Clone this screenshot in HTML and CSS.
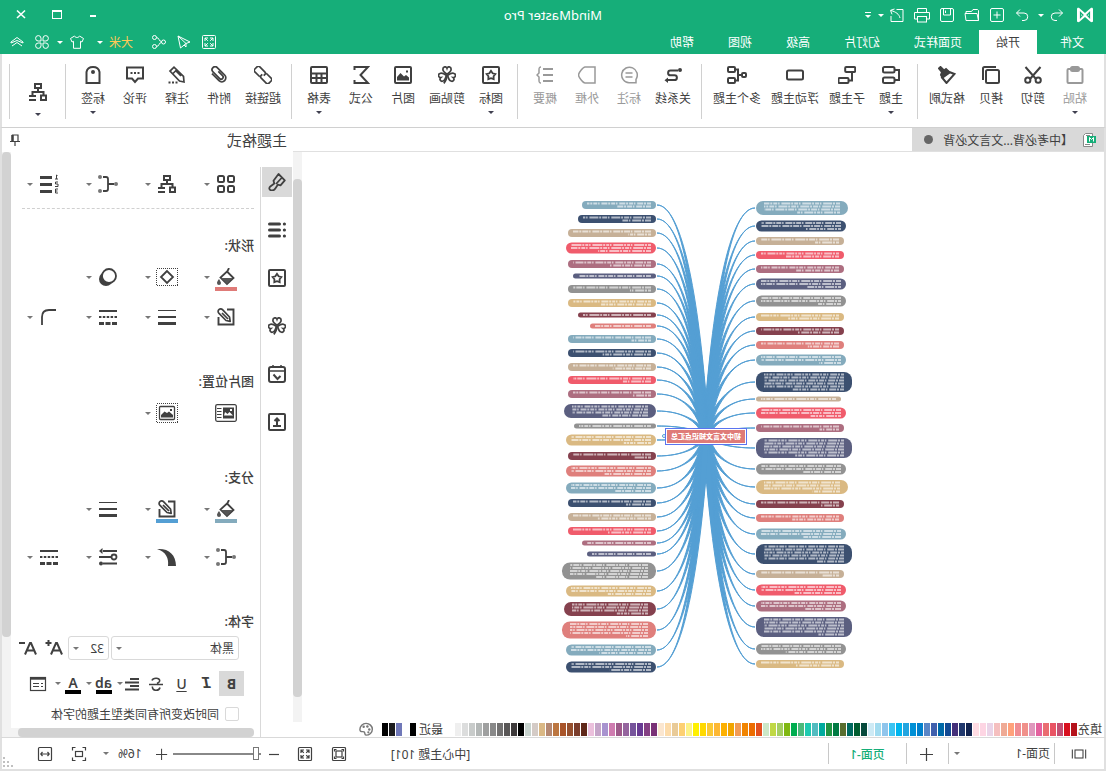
FILE: index.html
```html
<!DOCTYPE html>
<html lang="zh-CN">
<head>
<meta charset="utf-8">
<title>MindMaster Pro</title>
<link rel="stylesheet" href="styles.css">
</head>
<body>
<svg class="defs" aria-hidden="true">
  <symbol id="logo" viewBox="0 0 18 16"><path fill="#fff" stroke="none" d="M1 2C1 .8 2.6.4 3.500 1.300L9 6l5.500-4.700C15.400.4 17 .8 17 2v12c0 1.200-1.600 1.600-2.500.7L9 10l-5.500 4.700C2.600 15.600 1 15.200 1 14z"/><path stroke="#16ae79" stroke-width="1.200" fill="none" d="M4.500 5.500v5l2.500-2.500zM13.500 5.500v5L11 8z"/></symbol>
  <symbol id="undo" viewBox="0 0 16 16"><path d="M6 2.500 2.500 6 6 9.500M2.500 6H10a3.700 3.700 0 0 1 0 7.500H8"/></symbol>
  <symbol id="redo" viewBox="0 0 16 16"><path d="M10 2.500 13.500 6 10 9.500M13.500 6H6a3.700 3.700 0 0 0 0 7.500h2"/></symbol>
  <symbol id="new" viewBox="0 0 16 16"><rect x="1.500" y="1.500" width="13" height="13" rx="1.500"/><path d="M8 4.500v7M4.500 8h7"/></symbol>
  <symbol id="open" viewBox="0 0 16 16"><path d="M1.500 13.500V3.500l1-1H7l1.500 2H14v2M1.500 13.500 3 6.500h12l-1 7z"/></symbol>
  <symbol id="save" viewBox="0 0 16 16"><rect x="1.500" y="1.500" width="13" height="13" rx="1.500"/><path d="M4.500 2v6h7V2M9.500 3.500v2.500"/></symbol>
  <symbol id="print" viewBox="0 0 16 16"><path d="M3.500 5V1.500h9V5M3.500 12H.5V5.500h15V12h-3"/><rect x="3.500" y="9.500" width="9" height="5.500"/></symbol>
  <symbol id="export" viewBox="0 0 16 16"><path d="M8.500 2.500H2v12h12V9M5 11c1-4 4-6 9-7.500M10.500 2l4 1.300-1.500 4"/></symbol>
  <symbol id="expand" viewBox="0 0 16 16"><rect x="1.500" y="1.500" width="13" height="13" rx="1"/><path d="M4 7V4h3M4 4l2.800 2.800M9 4h3v3M12 4 9.200 6.800M4 9v3h3M4 12l2.800-2.800M12 9v3H9M12 12 9.200 9.200"/></symbol>
  <symbol id="cursor" viewBox="0 0 16 16"><path d="M14 2 2 8l4 1.500L11.500 14zM14 2 6 9.500V13l2-2"/></symbol>
  <symbol id="share" viewBox="0 0 16 16"><circle cx="3.500" cy="8" r="2"/><circle cx="12.500" cy="3.500" r="2"/><circle cx="12.500" cy="12.500" r="2"/><path d="M5.500 7.500c3 0 2-4 5-4M5.500 8.500c3 0 2 4 5 4"/></symbol>
  <symbol id="shirt" viewBox="0 0 16 16"><path d="M5.500 2 1.500 4.500 3 8l1.500-.7v7h7v-7L13 8l1.500-3.500-4-2.500c-1 2-4 2-5 0z"/></symbol>
  <symbol id="apps" viewBox="0 0 16 16"><path d="M7 7H4.200A2.700 2.700 0 1 1 7 4.200zM9 7V4.200A2.700 2.700 0 1 1 11.800 7zM7 9v2.800A2.700 2.700 0 1 1 4.200 9zM9 9h2.800A2.700 2.700 0 1 1 9 11.800z"/></symbol>
  <symbol id="up" viewBox="0 0 16 16"><path d="m2 8 6-4.500L14 8v1L8 6.500 2 9zM3 12l5-3.500 5 3.500"/></symbol>
  <symbol id="min" viewBox="0 0 16 16"><path stroke-width="2" d="M5 9h6"/></symbol>
  <symbol id="max" viewBox="0 0 16 16"><rect x="3.500" y="3.500" width="9" height="8" stroke-width="1"/><path d="M3 4h10" stroke-width="2"/></symbol>
  <symbol id="close" viewBox="0 0 16 16"><path stroke-width="1.600" d="m4 3.500 8 7.500M12 3.500 4 11"/></symbol>

  <symbol id="paste" viewBox="0 0 18 18"><rect x="1.500" y="3" width="15" height="14" rx="1"/><rect x="5" y="1" width="8" height="4" rx="1.500"/></symbol>
  <symbol id="cut" viewBox="0 0 18 18"><path d="M1.500 1 12 13M16.500 1 6 13"/><circle cx="3.800" cy="14.200" r="2.600"/><circle cx="14.200" cy="14.200" r="2.600"/></symbol>
  <symbol id="copy" viewBox="0 0 18 18"><rect x="1" y="4" width="13" height="13" rx="1.500"/><path d="M4 1h11.500a1.500 1.500 0 0 1 1.500 1.500V14"/></symbol>
  <symbol id="brush" viewBox="0 0 18 18"><path d="M1.500 8 8 5.500l6 6L9.500 17z"/><path fill="currentColor" d="m8 5 2-2 2 1.500L15.500 1 17 2.500 14 6l1 3-1.500 2.500-7-5z"/></symbol>
  <symbol id="topic" viewBox="0 0 18 18"><rect x="5.500" y="1" width="11.500" height="5.500" rx="1.500"/><rect x="5.500" y="11.500" width="11.500" height="5.500" rx="1.500"/><path d="M5 4H1v10h4"/></symbol>
  <symbol id="subtopic" viewBox="0 0 18 18"><rect x="0.800" y="1" width="10" height="5" rx="1"/><rect x="7.500" y="12" width="10" height="5" rx="1"/><path d="M4 6v8.500h3.500"/></symbol>
  <symbol id="float" viewBox="0 0 18 18"><rect x="1" y="4.500" width="16" height="9" rx="1.500"/></symbol>
  <symbol id="multi" viewBox="0 0 20 18"><rect x="1" y="7" width="4" height="4" rx="1"/><rect x="12" y="1" width="7" height="5" rx="1"/><rect x="12" y="12" width="7" height="5" rx="1"/><path d="M5 9h4M12 3.500H9v11h3"/></symbol>
  <symbol id="relation" viewBox="0 0 18 18"><path d="M4 4.500h7.500a2.400 2.400 0 0 1 0 4.800h-4a2.400 2.400 0 0 0 0 4.800H14"/><circle cx="2" cy="4" r="1" fill="currentColor"/><path d="m14 11.500 3.500 2.700L14 17z" fill="currentColor" stroke="none"/></symbol>
  <symbol id="callout" viewBox="0 0 18 18"><path stroke-width="1.500" d="M2 16.800v-3.500A7.800 7.800 0 1 1 9 16.800zM5.500 7h7M5.500 11h7"/></symbol>
  <symbol id="frame" viewBox="0 0 18 18"><path stroke-width="1.500" d="M1 1h10c2 0 6.500 6 6.500 8S13 17 11 17H1z"/></symbol>
  <symbol id="summary" viewBox="0 0 18 18"><path d="M1 3h10M1 9h10M1 15h10"/><path stroke-width="1.500" d="M13 1c2 0 2 1 2 3v3l2 2-2 2v3c0 2 0 3-2 3"/></symbol>
  <symbol id="starbox" viewBox="0 0 18 18"><rect x="1" y="1" width="16" height="16" rx="1"/><path stroke-width="1.800" d="m9 4.800 1.600 2.500 2.800.8-1.800 2.200.1 2.900L9 12.200l-2.700 1 .1-2.900L4.600 8.100l2.800-.8z"/></symbol>
  <symbol id="clover" viewBox="0 0 18 18"><g stroke-width="1.700"><path id="leaf" d="M9 8.300C6 6.300 4.700 4.700 4.900 3a2.100 2.100 0 0 1 4.100-.7 2.100 2.100 0 0 1 4.100.7c.2 1.700-1.100 3.300-4.100 5.300z"/><use href="#leaf" transform="rotate(112 9 9)"/><use href="#leaf" transform="rotate(-112 9 9)"/><path d="M9 9c.2 3.500 1 6 3.200 8.300"/></g></symbol>
  <symbol id="image" viewBox="0 0 18 18"><rect x="1" y="1" width="16" height="16" rx="1"/><path fill="currentColor" stroke="none" d="M3 14.500v-3L6 9l2 1.500L11.500 7l3.500 4v3.500zM4 4.500h2v2H4z"/></symbol>
  <symbol id="sum" viewBox="0 0 18 18"><path d="M15.500 4V1H2l7.500 8L2 17h13.500v-3"/></symbol>
  <symbol id="table" viewBox="0 0 18 18"><rect x="1" y="1" width="16" height="16" rx="1"/><path d="M1 7.500h16M1 12h16M6.500 8v9M11.500 8v9"/></symbol>
  <symbol id="link" viewBox="0 0 18 18"><g stroke-width="1.700" transform="rotate(-45 9 9)"><path d="M8 5.500H1Q-1 5.500-1 7.500v3q0 2 2 2h7q2 0 2-2V9"/><path d="M10 12.500h7q2 0 2-2v-3q0-2-2-2h-7q-2 0-2 2V9"/></g></symbol>
  <symbol id="clip" viewBox="0 0 18 18"><path stroke-width="1.700" transform="rotate(45 9 9)" d="M13 5v8a4 4 0 0 1-8 0V2.500a3 3 0 0 1 6 0V12a2 2 0 0 1-4 0V6M13 5V3"/></symbol>
  <symbol id="note" viewBox="0 0 18 18"><path stroke-width="1.700" d="m2 16 .5-5.500L12 1.200l4 3.900L6.500 15zM9.500 4l4 4M5 10l5-5"/><path stroke-dasharray="2 1.500" d="M8.500 16.500H18"/></symbol>
  <symbol id="comment" viewBox="0 0 18 18"><path d="M1 1.500h16v11h-5L9 16l-3-3.500H1z"/><path stroke-dasharray="2 1.500" d="M4.500 7h9"/></symbol>
  <symbol id="tag" viewBox="0 0 18 18"><path d="M2.500 17V6Q3.500 1 9 1t6.500 5v11z"/><circle cx="9" cy="6" r="1" fill="currentColor"/></symbol>
  <symbol id="tree" viewBox="0 0 18 18"><rect x="6" y="1" width="6" height="4"/><rect x="1" y="12.500" width="5" height="4.500"/><path d="M9 5v4M3.500 12V9h11v3M11 13h7M11 17h7"/></symbol>

  <symbol id="grid4" viewBox="0 0 18 18"><rect x="1" y="1" width="6" height="6" rx="1.500"/><rect x="11" y="1" width="6" height="6" rx="1.500"/><rect x="1" y="11" width="6" height="6" rx="1.500"/><rect x="11" y="11" width="6" height="6" rx="1.500"/></symbol>
  <symbol id="branch" viewBox="0 0 20 18"><path d="M4 9h6M15 2h-3q-2 0-2 2v10q0 2 2 2h3" stroke-width="1.800"/><g fill="#777" stroke="none"><circle cx="2" cy="9" r="2"/><circle cx="18" cy="2" r="2"/><circle cx="18" cy="16" r="2"/></g></symbol>
  <symbol id="numlist" viewBox="0 0 20 20"><path stroke-width="3" d="M7 3.500h12M7 10.500h12M7 17.500h12"/><path stroke-width="1" d="M1.500 1.500 2.500 1v4M1 5h3M1 8h2.500v2H1v2.500h3M1 15h2.500v4H1M1.500 17h2"/></symbol>
  <symbol id="bucket" viewBox="0 0 18 18"><path stroke-width="1.800" d="M6 0l2 4M8 3.500 1.500 10 8 16l6.500-6.500z"/><path fill="#555" stroke="none" d="M2.500 10h11.500L8 16zM16 11c1.500 2 2 3 2 4a2 2 0 0 1-4 0c0-1 .8-2 2-4z"/></symbol>
  <symbol id="shape" viewBox="0 0 22 20"><path stroke-width="1" stroke-dasharray="1 1" d="M0 1.500h22M0 18.500h22M.5 3v15M21.500 3v15"/><path stroke-width="1.800" d="m11 4 6 6-6 6-6-6z"/></symbol>
  <symbol id="shadow" viewBox="0 0 18 18"><circle cx="11" cy="11" r="7" fill="currentColor" stroke="none"/><circle cx="8" cy="8" r="7" fill="#fff" stroke-width="1.800"/></symbol>
  <symbol id="edit" viewBox="0 0 18 18"><path stroke-width="1.900" d="M8 1.500H1.500v15h15V9"/><path stroke-width="1.700" stroke-linejoin="round" d="M12.500 1.700a2.500 2.500 0 0 1 3.700 3.500L9 12.500l-4.200.8.700-4.300zM7 11l6-6"/></symbol>
  <symbol id="weights" viewBox="0 0 18 18"><path stroke-width="1" d="M0 2.500h18"/><path stroke-width="2" d="M0 9h18"/><path stroke-width="3" d="M0 15.500h18"/></symbol>
  <symbol id="dashes" viewBox="0 0 18 18"><path d="M0 3h18"/><path stroke-dasharray="2.500 1.400" d="M0 9h18"/><path stroke-width="3" stroke-dasharray="5 1.500" d="M0 15.500h18"/></symbol>
  <symbol id="corner" viewBox="0 0 18 18"><path stroke-width="1.800" d="M2 2h7q7 0 7 7v8"/></symbol>
  <symbol id="imgtext" viewBox="0 0 22 18"><rect x=".7" y=".7" width="20.600" height="16.600" rx="1.500" stroke-width="1.300"/><path fill="currentColor" stroke="none" d="M3 3.500h11v11H3z"/><path fill="#fff" stroke="none" d="M4 11.500 7.500 8l2 2L12 8l1 3.500zM5 5h2v2H5z"/><path stroke-width="1" d="M15.500 4.500H20M15.500 7.500H20M15.500 10.500H20M15.500 13.500H20"/></symbol>
  <symbol id="imgdash" viewBox="0 0 22 20"><path stroke-width="1" stroke-dasharray="1 1" d="M0 .5h22M0 19.500h22M.5 2v17M21.500 2v17"/><rect x="3.500" y="3.500" width="15" height="13" rx="1" stroke-width="1.300"/><path fill="currentColor" stroke="none" d="M5 14.500V12l4-3.500 2 1.500 2.500-1.500L17 12v2.500zM6 6h2v2H6z"/></symbol>
  <symbol id="taper" viewBox="0 0 20 18"><path fill="currentColor" stroke="none" d="M20 1C9 0 1 6 1 18h8C8 10 11 4 20 1z"/></symbol>
  <symbol id="arrows" viewBox="0 0 20 18"><path stroke-width="1.800" d="M1 3h14M7 9h12M1 15.500h14"/><circle cx="4" cy="9" r="2.500" stroke-width="1.800"/><circle cx="17" cy="15.500" r="2" fill="currentColor" stroke="none"/><path fill="currentColor" stroke="none" d="M15.500 0v6L19 3z"/></symbol>
  <symbol id="paint" viewBox="0 0 18 18"><path stroke-width="1.800" stroke-linejoin="round" d="M7.500 1 1.200 7.300l4.300 5 2.700-.6 2.500 3.800c1 1.500 3 2.300 4.500 1.800 1.800-.6 2-2.500.5-3.800l-4-3 .8-2.700zM4 4.500l6 6.500"/></symbol>
  <symbol id="list" viewBox="0 0 18 18"><path stroke-width="3" stroke-linecap="round" d="M6.500 3h10M6.500 9h10M6.500 15h10M1.500 3h.2M1.500 9h.2M1.500 15h.2"/></symbol>
  <symbol id="calendar" viewBox="0 0 18 18"><rect x="1" y="2" width="16" height="15" rx="2"/><path stroke-width="1.500" d="M1 6h16M5 0v3M13 0v3"/><path d="M5.500 11l3 3 4-4.500"/></symbol>
  <symbol id="upload" viewBox="0 0 18 18"><rect x="1" y="1" width="16" height="16" rx="1"/><path d="M5 13h8M9 12V6M6.500 8 9 5.500 11.500 8"/></symbol>
  <symbol id="pin" viewBox="0 0 12 14"><path stroke-width="1.200" d="M3 8V2h5.500v6M1 8.500h10M6 9v4"/><path stroke-width="2.500" d="M8.500 2v6"/></symbol>

  <symbol id="aplus" viewBox="0 0 18 18"><path d="M1 15.500 6 4h1l5 11.500M3 11.500h7M11.500 4h6M14.500 1v6"/></symbol>
  <symbol id="aminus" viewBox="0 0 18 18"><path d="M1 15.500 6 4h1l5 11.500M3 11.500h7M12 4h6"/></symbol>
  <symbol id="align" viewBox="0 0 16 16"><path d="M1 3h9M1 6.500h14M1 10h9M1 13.500h14"/></symbol>
  <symbol id="strike" viewBox="0 0 16 16"><path stroke-width="1.600" d="M12 4.500C11 1.500 4 1.500 4.300 5c.2 1.500 1.700 2 2.700 2.500M1 8.500h14M11.500 10.500C12.500 15 5 15.500 4 11.500"/></symbol>
  <symbol id="card" viewBox="0 0 18 16"><rect x="1.500" y="1.500" width="15" height="13" stroke-width="1.200"/><path stroke-width="2.400" d="M1 2.500h16"/><path stroke-width="1.200" d="M4 7.500h2M8 7.500h6M4 10.500h2M8 10.500h6"/></symbol>
  <symbol id="palette" viewBox="0 0 16 16"><path stroke="#777" stroke-width="1.500" d="M8 1.500a6.500 6 0 0 0 0 12.500c2 0 .5-2.500 2-3.500 1.500-.8 4.500 1 4.500-2.500A6.500 6.500 0 0 0 8 1.500z"/><g fill="#777" stroke="none"><circle cx="4.500" cy="8" r="1.300"/><circle cx="6.500" cy="4.800" r="1.300"/><circle cx="10.500" cy="5" r="1.300"/><circle cx="5.500" cy="11" r="1.200"/></g></symbol>
  <symbol id="pages" viewBox="0 0 18 16"><path d="M1.500 3v10M16.500 3v10"/><rect x="4.500" y="3.500" width="9" height="9"/></symbol>
  <symbol id="plus" viewBox="0 0 14 14"><path d="M7.500 1v13M1 7.500h13"/></symbol>
  <symbol id="minus" viewBox="0 0 14 14"><path d="M2 7.500h10"/></symbol>
  <symbol id="fit" viewBox="0 0 16 16"><rect x="1.500" y="1.500" width="13" height="13" rx="1"/><rect x="5" y="5" width="6" height="6"/><path d="M3.500 5.500v-2h2M10.500 3.500h2v2M12.500 10.500v2h-2M5.500 12.500h-2v-2"/></symbol>
  <symbol id="focus" viewBox="0 0 16 16"><rect x="4.500" y="5.500" width="7" height="5"/><path d="M1.500 4.500v-3h3M11.500 1.500h3v3M14.500 11.500v3h-3M4.500 14.500h-3v-3"/></symbol>
  <symbol id="width" viewBox="0 0 16 16"><rect x="1.500" y="1.500" width="13" height="13" rx="1"/><path d="M4 8h8M5.500 6 3.800 8l1.700 2M10.500 6l1.700 2-1.700 2"/></symbol>
  <symbol id="doc" viewBox="0 0 14 14"><path stroke="#888" fill="#fff" d="M3.500.5h7l2 2v11h-9z"/><path stroke="#888" d="M6 11.500h5M6 2.500h4"/><rect y="3" width="9" height="7" fill="#16ae79" stroke="none"/><path stroke="#fff" d="M2.500 8.500V4.500L4.500 6.500 6.500 4.500v4"/></symbol>
</svg>

<div class="app">
  <header class="header">
    <div class="titlebar">
      <div class="quick">
        <svg class="logo"><use href="#logo"/></svg>
        <button class="hbtn" aria-label="撤销"><svg><use href="#undo"/></svg></button>
        <button class="drop" aria-label="撤销列表"></button>
        <button class="hbtn" aria-label="恢复"><svg><use href="#redo"/></svg></button>
        <button class="hbtn" aria-label="新建"><svg><use href="#new"/></svg></button>
        <button class="hbtn" aria-label="打开"><svg><use href="#open"/></svg></button>
        <button class="hbtn" aria-label="保存"><svg><use href="#save"/></svg></button>
        <button class="hbtn" aria-label="打印"><svg><use href="#print"/></svg></button>
        <button class="hbtn" aria-label="导出"><svg><use href="#export"/></svg></button>
        <button class="drop" aria-label="导出列表"></button>
        <button class="drop more" aria-label="更多"></button>
      </div>
      <h1 class="title">MindMaster Pro</h1>
      <div class="window">
        <button class="wbtn" aria-label="最小化"><svg><use href="#min"/></svg></button>
        <button class="wbtn" aria-label="最大化"><svg><use href="#max"/></svg></button>
        <button class="wbtn" aria-label="关闭"><svg><use href="#close"/></svg></button>
      </div>
    </div>
    <div class="menubar">
      <nav class="tabs">
        <button class="tab file">文件</button><button class="tab active">开始</button><button class="tab">页面样式</button><button class="tab">幻灯片</button><button class="tab">高级</button><button class="tab">视图</button><button class="tab">帮助</button>
      </nav>
      <div class="account">
        <button class="hbtn" aria-label="全屏"><svg><use href="#expand"/></svg></button>
        <button class="hbtn" aria-label="发送"><svg><use href="#cursor"/></svg></button>
        <button class="hbtn" aria-label="分享"><svg><use href="#share"/></svg></button>
        <button class="user">大米</button>
        <button class="drop" aria-label="账户"></button>
        <button class="hbtn" aria-label="主题"><svg><use href="#shirt"/></svg></button>
        <button class="drop" aria-label="主题列表"></button>
        <button class="hbtn" aria-label="应用"><svg><use href="#apps"/></svg></button>
        <button class="hbtn" aria-label="收起"><svg><use href="#up"/></svg></button>
      </div>
    </div>
  </header>

  <div class="ribbon">
    <div class="group">
      <button class="cmd muted"><svg><use href="#paste"/></svg>粘贴<i class="caret"></i></button>
      <button class="cmd"><svg><use href="#cut"/></svg>剪切</button>
      <button class="cmd"><svg><use href="#copy"/></svg>拷贝</button>
      <button class="cmd"><svg><use href="#brush"/></svg>格式刷</button>
    </div>
    <div class="group">
      <button class="cmd"><svg><use href="#topic"/></svg>主题<i class="caret"></i></button>
      <button class="cmd"><svg><use href="#subtopic"/></svg>子主题</button>
      <button class="cmd"><svg><use href="#float"/></svg>浮动主题</button>
      <button class="cmd"><svg class="wide"><use href="#multi"/></svg>多个主题</button>
    </div>
    <div class="group">
      <button class="cmd"><svg><use href="#relation"/></svg>关系线</button>
      <button class="cmd muted"><svg><use href="#callout"/></svg>标注</button>
      <button class="cmd muted"><svg><use href="#frame"/></svg>外框</button>
      <button class="cmd muted"><svg><use href="#summary"/></svg>概要</button>
    </div>
    <div class="group">
      <button class="cmd"><svg><use href="#starbox"/></svg>图标<i class="caret"></i></button>
      <button class="cmd"><svg><use href="#clover"/></svg>剪贴画</button>
      <button class="cmd"><svg><use href="#image"/></svg>图片</button>
      <button class="cmd"><svg><use href="#sum"/></svg>公式</button>
      <button class="cmd"><svg><use href="#table"/></svg>表格<i class="caret"></i></button>
    </div>
    <div class="group">
      <button class="cmd"><svg><use href="#link"/></svg>超链接</button>
      <button class="cmd"><svg><use href="#clip"/></svg>附件</button>
      <button class="cmd"><svg><use href="#note"/></svg>注释</button>
      <button class="cmd"><svg><use href="#comment"/></svg>评论</button>
      <button class="cmd"><svg><use href="#tag"/></svg>标签<i class="caret"></i></button>
    </div>
    <div class="group">
      <button class="cmd layout" aria-label="布局"><svg><use href="#tree"/></svg><i class="caret"></i></button>
    </div>
  </div>

  <div class="work">
    <main class="main">
      <div class="docs">
        <button class="doc"><svg><use href="#doc"/></svg><span>【中考必背...文言文必背</span><i class="dirty"></i></button>
      </div>
      <div class="stage">
        <svg class="map" id="map" viewBox="2 152 802 570" role="img" aria-label="初中文言文知识点汇总"></svg>
        <div class="vscroll"><i></i></div>
      </div>
      <div class="colors">
        <span>填充</span>
        <div class="swatches" id="fill"></div>
        <span class="recent">最近</span>
        <div class="swatches" id="recent"></div>
        <button class="pick" aria-label="调色板"><svg><use href="#palette"/></svg></button>
      </div>
    </main>

    <aside class="panel">
      <div class="panel-head"><h2>主题格式</h2><button aria-label="固定"><svg><use href="#pin"/></svg></button></div>
      <div class="panel-body">
        <nav class="rail">
          <button class="on" aria-label="格式"><svg><use href="#paint"/></svg></button>
          <button aria-label="大纲"><svg><use href="#list"/></svg></button>
          <button aria-label="图标"><svg><use href="#starbox"/></svg></button>
          <button aria-label="剪贴画"><svg><use href="#clover"/></svg></button>
          <button aria-label="任务"><svg><use href="#calendar"/></svg></button>
          <button aria-label="导出"><svg><use href="#upload"/></svg></button>
        </nav>
        <div class="format">
          <div class="scroller">
            <div class="tools">
              <button aria-label="布局"><svg><use href="#grid4"/></svg><i class="caret"></i></button>
              <button aria-label="结构"><svg><use href="#tree"/></svg><i class="caret"></i></button>
              <button aria-label="连线"><svg class="wide"><use href="#branch"/></svg><i class="caret"></i></button>
              <button aria-label="编号"><svg class="big"><use href="#numlist"/></svg><i class="caret"></i></button>
            </div>
            <section class="first">
              <h3>形状:</h3>
              <div class="tools">
                <button aria-label="填充"><span class="ink red"><svg><use href="#bucket"/></svg></span><i class="caret"></i></button>
                <button aria-label="形状"><svg class="box"><use href="#shape"/></svg><i class="caret"></i></button>
                <button aria-label="阴影"><svg><use href="#shadow"/></svg><i class="caret"></i></button>
              </div>
              <div class="tools near">
                <button aria-label="线条颜色"><svg><use href="#edit"/></svg><i class="caret"></i></button>
                <button aria-label="线条宽度"><svg><use href="#weights"/></svg><i class="caret"></i></button>
                <button aria-label="虚线"><svg><use href="#dashes"/></svg><i class="caret"></i></button>
                <button aria-label="圆角"><svg><use href="#corner"/></svg><i class="caret"></i></button>
              </div>
            </section>
            <section>
              <h3>图片位置:</h3>
              <div class="tools">
                <button aria-label="图文"><svg class="box"><use href="#imgtext"/></svg></button>
                <button aria-label="图片"><svg class="box"><use href="#imgdash"/></svg><i class="caret"></i></button>
              </div>
            </section>
            <section>
              <h3>分支:</h3>
              <div class="tools">
                <button aria-label="分支填充"><span class="ink teal"><svg><use href="#bucket"/></svg></span><i class="caret"></i></button>
                <button aria-label="分支颜色"><span class="ink blue"><svg><use href="#edit"/></svg></span><i class="caret"></i></button>
                <button aria-label="分支宽度"><svg><use href="#weights"/></svg><i class="caret"></i></button>
              </div>
              <div class="tools far">
                <button aria-label="分支样式"><svg class="wide"><use href="#branch"/></svg><i class="caret"></i></button>
                <button aria-label="渐细"><svg class="wide"><use href="#taper"/></svg><i class="caret"></i></button>
                <button aria-label="箭头"><svg class="wide"><use href="#arrows"/></svg><i class="caret"></i></button>
                <button aria-label="分支虚线"><svg><use href="#dashes"/></svg><i class="caret"></i></button>
              </div>
            </section>
            <section>
              <h3>字体:</h3>
              <div class="fontrow">
                <div class="combo family"><select aria-label="字体"><option>黑体</option></select><i class="caret"></i></div>
                <div class="combo size"><select aria-label="字号"><option>32</option></select><i class="caret"></i></div>
                <button class="step" aria-label="增大字号"><svg><use href="#aplus"/></svg></button>
                <button class="step" aria-label="减小字号"><svg><use href="#aminus"/></svg></button>
              </div>
              <div class="styles">
                <button class="on"><b>B</b></button>
                <button><em>I</em></button>
                <button><u>U</u></button>
                <button aria-label="删除线"><svg><use href="#strike"/></svg></button>
                <button class="pair" aria-label="对齐"><svg><use href="#align"/></svg><i class="caret"></i></button>
                <button class="pair"><span class="mark">ab</span><i class="caret"></i></button>
                <button class="pair"><span class="mark">A</span><i class="caret"></i></button>
                <button aria-label="文本框"><svg class="card"><use href="#card"/></svg></button>
              </div>
              <label class="check"><input type="checkbox">同时改变所有同类型主题的字体</label>
            </section>
          </div>
          <div class="hscroll"><i></i></div>
        </div>
        <div class="vscroll side"><i></i></div>
      </div>
    </aside>
  </div>

  <footer class="status">
    <button class="pages" aria-label="页面列表"><svg><use href="#pages"/></svg></button>
    <div class="page-select"><select aria-label="页面"><option>页面-1</option></select><i class="caret"></i></div>
    <button class="add" aria-label="添加页面"><svg class="small"><use href="#plus"/></svg></button>
    <button class="page">页面-1</button>
    <span class="info">[中心主题 101]</span>
    <button class="view" aria-label="适应"><svg><use href="#fit"/></svg></button>
    <button class="view" aria-label="全屏"><svg><use href="#expand"/></svg></button>
    <button class="zoom out" aria-label="缩小"><svg class="small"><use href="#minus"/></svg></button>
    <input class="slider" type="range" min="0" max="100" value="2" aria-label="缩放">
    <button class="zoom" aria-label="放大"><svg class="tiny"><use href="#plus"/></svg></button>
    <button class="percent">16%<i class="caret"></i></button>
    <button class="view" aria-label="聚焦"><svg><use href="#focus"/></svg></button>
    <button class="view" aria-label="适应宽度"><svg><use href="#width"/></svg></button>
    <span class="grip"><svg viewBox="0 0 12 12"><path d="M9 0h2v2H9zM9 4h2v2H9zM5 4h2v2H5zM9 8h2v2H9zM5 8h2v2H5zM1 8h2v2H1z"/></svg></span>
  </footer>
</div>
<script src="app.js"></script>
</body>
</html>
```

FILE: styles.css
```css
* { box-sizing: border-box; }

body {
  margin: 0;
  font-family: "Noto Sans", "Noto Sans CJK SC", sans-serif;
  font-size: 12px;
  color: #404040;
}

button, select, input { font: inherit; color: inherit; margin: 0; }
button { border: 0; background: none; padding: 0; display: flex; align-items: center; justify-content: center; white-space: nowrap; }
select { appearance: none; border: 0; background: none; padding: 0; width: 100%; }
h1, h2, h3 { margin: 0; font-weight: 400; }
svg { display: block; flex: none; width: 18px; height: 18px; fill: none; stroke: currentColor; stroke-width: 2; }
.defs { position: absolute; width: 0; height: 0; }

.app {
  height: 100vh;
  display: flex;
  flex-direction: column;
  background: #fff;
  transform: scaleX(-1);
  border-bottom: 2px solid #e0e0e0;
}

.caret { width: 0; height: 0; border: 3px solid transparent; border-top-color: currentColor; border-bottom: 0; }

/* header */
.header { background: #16ae79; color: #fff; }
.header svg { width: 16px; height: 16px; stroke-width: 1; }
.titlebar { height: 30px; display: grid; grid-template-columns: 1fr auto 1fr; align-items: center; }
.quick { display: flex; align-items: center; padding-left: 12px; }
.quick .logo { width: 18px; margin-right: 6px; }
.hbtn { width: 25px; height: 24px; }
.drop { width: 8px; height: 24px; flex-direction: column; }
.drop::after { content: ""; border: 3px solid transparent; border-top-color: #fff; border-bottom: 0; }
.quick .drop { margin-right: 2px; }
.quick .drop.more { width: 14px; }
.drop.more::before { content: ""; width: 6px; height: 1px; background: #fff; margin-bottom: 2px; }
.title { font-size: 13px; line-height: 30px; }
.window { display: flex; justify-content: flex-end; padding-right: 3px; }
.wbtn { width: 36px; height: 28px; }
.menubar { height: 24px; display: flex; justify-content: space-between; }
.tabs, .account { display: flex; }
.tab { height: 24px; padding: 0 17px; }
.tab.file { padding: 0 23px 0 22px; }
.tab.active { background: #fff; color: #404040; }
.account { padding-right: 5px; align-items: center; }
.account .drop { width: 10px; }
.user { color: #ffc857; margin: 0 4px 0 13px; }
.user + .drop { margin-right: 5px; }

/* ribbon */
.ribbon { height: 74px; display: flex; padding: 10px 0 8px 2px; border: solid #e0e0e0; border-width: 0 2px; border-bottom: 1px solid #d0d0d0; }
.group { display: flex; padding: 0 6px; border-right: 1px solid #d0d0d0; }
.group + .group { padding-left: 5px; }
.cmd { min-width: 42px; padding: 2px 5px 0; flex-direction: column; justify-content: flex-start; line-height: 18px; }
.cmd svg { margin-bottom: 6px; }
.cmd .caret { margin-top: 3px; color: #404050; }
.cmd.muted { color: #999; }
.cmd.layout { width: 44px; padding-top: 19px; color: #404040; }
.cmd.layout .caret { margin-top: 6px; }
svg.wide { width: 20px; }
svg.big { width: 20px; height: 20px; }
svg.box { width: 22px; height: 20px; }

/* workspace */
.work { flex: 1; min-height: 0; display: flex; border: solid #e0e0e0; border-width: 0 2px; }
.main { flex: 1; min-width: 0; display: flex; flex-direction: column; }
.docs { height: 24px; border-bottom: 1px solid #e0e0e0; }
.doc { height: 23px; width: 192px; padding-left: 8px; justify-content: flex-start; background: #d9d9d9; }
.doc svg { width: 14px; height: 14px; stroke-width: 1; margin-right: 9px; }
.dirty { width: 9px; height: 9px; border-radius: 50%; background: #666; margin-left: 10px; }
.stage { flex: 1; min-height: 0; display: flex; }
.map { flex: 1; min-width: 0; width: 100%; height: 100%; }
.map text { fill: #fff; stroke: none; font-size: 7px; font-weight: 900; text-anchor: middle; }
.vscroll { width: 9px; display: grid; grid-template-rows: 27fr 519fr 25fr; background: #f3f3f3; }
.vscroll i { grid-row: 2; border-radius: 4px; background: #d2d2d2; }
.vscroll.side { grid-template-rows: 0 485fr 100fr; }
.colors { height: 15px; display: flex; align-items: center; padding-left: 2px; line-height: 15px; }
.swatches { display: flex; gap: 1px; margin-left: 1px; }
.swatches i { width: 6px; height: 13px; }
.recent { margin-left: 12px; }
.recent + .swatches { margin-left: 3px; }
.pick { margin-left: 8px; }
.pick svg { width: 16px; height: 15px; }

/* side panel */
.panel { width: 291px; display: flex; flex-direction: column; }
.panel-head { height: 24px; padding: 0 7px 0 6px; display: flex; align-items: center; justify-content: space-between; }
.panel-head h2 { font-size: 15px; line-height: 24px; }
.panel-head svg { width: 12px; height: 14px; }
.panel-body { flex: 1; min-height: 0; display: flex; }
.rail { width: 33px; margin-top: 15px; padding-left: 1px; border-right: 1px solid #d9d9d9; display: flex; flex-direction: column; gap: 18px; }
.rail button { width: 30px; height: 30px; }
.rail button.on { background: #d9d9d9; }
.format { flex: 1; min-width: 0; display: flex; flex-direction: column; }
.scroller { flex: 1; min-height: 0; overflow: hidden; padding: 16px 11px 0 6px; }
.tools { display: grid; grid-template-columns: repeat(4, 59px); padding-left: 12px; width: 248px; }
.tools button { height: 32px; justify-content: flex-start; }
.tools button > svg, .ink { margin: 0 5px; flex: none; }
.tools button > svg { width: 22px; }
.tools .caret { color: #777; }
.ink { width: 22px; display: flex; flex-direction: column; align-items: center; gap: 1px; padding-top: 4px; }
.ink::after { content: ""; width: 22px; height: 4px; background: #df7b78; }
.ink.teal::after { background: #84abbd; }
.ink.blue::after { background: #549fd4; }
.near { margin-top: 8px; }
.far { margin-top: 16px; }
section { margin-top: 38px; }
section.first { margin-top: 8px; padding-top: 26px; border-top: 1px dashed #d0d0d0; }
h3 { font-size: 13px; font-weight: 500; line-height: 20px; margin-bottom: 6px; }
.fontrow { display: flex; gap: 2px; padding-left: 15px; }
section h3:has(+ .fontrow) { margin-bottom: 5px; }
.combo { display: flex; flex: none; align-items: center; height: 24px; padding: 0 4px; border: 1px solid #d9d9d9; border-radius: 3px; }
.combo .caret, .page-select .caret, .percent .caret { color: #777; }
.family { width: 128px; }
.size { width: 41px; }
.step { flex: none; width: 24px; height: 24px; }
.styles { display: flex; padding-left: 10px; margin-top: 11px; width: 240px; }
.styles button { width: 25px; height: 25px; flex: none; font-size: 14px; }
.styles button.on { background: #d9d9d9; }
.styles em { font-family: "Liberation Mono", monospace; font-size: 16px; font-weight: 700; }
.styles u { text-underline-offset: 2px; font-weight: 500; }
.styles svg { width: 16px; height: 16px; }
.styles svg.card { width: 18px; }
.styles .pair { width: 31px; justify-content: space-between; padding: 0 4px 0 1px; }
.styles .pair .caret { color: #777; }
.styles .pair svg { margin-left: 3px; }
.mark { width: 16px; border-bottom: 4px solid #000; font-weight: 600; line-height: 15px; text-align: center; margin-top: 2px; }
.check { display: flex; align-items: center; gap: 6px; height: 20px; margin-top: 8px; padding-left: 15px; white-space: nowrap; }
.check input { appearance: none; flex: none; width: 14px; height: 14px; border: 1px solid #d9d9d9; border-radius: 2px; }
.hscroll { height: 9px; display: grid; grid-template-columns: 6fr 236fr 7fr; background: linear-gradient(90deg, #fff 90%, #f3f3f3 90%); }
.hscroll i { grid-column: 2; border-radius: 4px; background: #d2d2d2; }

/* status bar */
.status { height: 32px; display: flex; align-items: center; border: solid #e0e0e0; border-width: 0 2px; border-top: 1px solid #d9d9d9; }
.status svg { width: 16px; height: 16px; stroke-width: 1.2; }
.status svg.small { width: 14px; height: 14px; }
.status svg.tiny { width: 12px; height: 12px; }
.status .pages, .page-select, .add, .page { height: 21px; border-right: 1px solid #c8c8c8; }
.pages { width: 50px; }
.page-select { width: 106px; padding: 0 5px 0 4px; display: flex; align-items: center; }
.add { width: 42px; }
.page { width: 78px; color: #16ae79; font-weight: 500; }
.info { margin-left: auto; margin-right: 35px; }
.view { width: 34px; height: 28px; }
.zoom { width: 22px; height: 28px; }
.zoom.out { margin-left: 3px; }
.slider { appearance: none; width: 88px; height: 14px; background: linear-gradient(#888, #888) center / 100% 2px no-repeat; margin: 0 0 0 2px; }
.slider::-webkit-slider-thumb { appearance: none; width: 6px; height: 13px; background: #fff; border: 1px solid #777; }
.percent { gap: 9px; margin: 0 7px 0 9px; }
.status .grip { align-self: flex-end; margin-left: 14px; width: 12px; }
.status .grip svg { width: 12px; height: 12px; fill: #c0c0c0; stroke: none; }
```

FILE: app.js
```js
const NS = "http://www.w3.org/2000/svg";
const map = document.getElementById("map");
const palette = ["#84abbd", "#3c5070", "#c6b097", "#f05b6b", "#ad6e80", "#5b5f80", "#929292", "#dab982", "#85414e", "#df7f7c"];

/* Each topic: width, vertical centre, number of text lines. */
const left = [[92,208,4],[90,226,3],[88,241,2],[88,255,2],[88,269,2],[90,284,3],[90,301,3],[88,317,2],[88,331,2],[88,345,2],[90,360,3],[96,382,6],[85,399,1],[90,413,3],[88,428,2],[96,448,6],[90,469,3],[92,487,4],[88,504,2],[88,518,2],[90,534,3],[96,554,6],[88,574,2],[90,590,3],[90,606,3],[96,627,6],[90,649,3],[88,664,2]];
const right = [[74,205,2],[78,219,2],[88,233,2],[90,248,3],[88,264,2],[83,276,1],[88,289,2],[88,303,2],[78,315,1],[66,326,1],[88,339,2],[88,353,2],[88,367,2],[88,380,2],[88,394,2],[92,411,4],[82,426,1],[90,440,3],[88,456,2],[90,471,3],[90,488,3],[88,503,2],[88,517,2],[88,531,2],[74,543,1],[69,554,1],[94,571,5],[90,591,3],[92,609,4],[94,630,5],[90,650,3],[90,667,3]];

function add(tag, attrs) {
  const el = document.createElementNS(NS, tag);
  for (const k in attrs) el.setAttribute(k, attrs[k]);
  map.appendChild(el);
  return el;
}

const root = { x: 400, y: 436 };

/* A branch is widest at the root and thins out towards its topic. */
function branch(x, y) {
  const dx = x - root.x, dy = y - root.y;
  const half = s => `${root.x + dx * 0.15 + s} ${root.y + dy * 0.59}`;
  const far = root.x + dx * 0.48;
  const d = `M${root.x - 3} ${root.y}C${half(-1.5)} ${far} ${y} ${x} ${y}` +
            `C${far} ${y} ${half(1.5)} ${root.x + 3} ${root.y}z`;
  add("path", { d, fill: "#549fd4", stroke: "#549fd4", "stroke-width": 1 });
}

function topic(x, y, w, lines, color, seed) {
  const h = 2 + 3 * lines;
  add("rect", { x, y: y - h / 2, width: w, height: h, rx: Math.min(h / 2, 8), fill: color, stroke: "none" });
  const pad = lines > 3 ? 8 : 5;
  for (let i = 0; i < lines; i++) {
    const full = w - 2 * pad;
    const len = lines > 1 && i === lines - 1 ? full * (0.2 + (seed * 37 % 50) / 100) : full;
    const ly = y - h / 2 + 2.5 + i * 3;
    const a = 3 + (seed + i) % 4, b = 6 + (seed * 3 + i * 5) % 5;
    add("path", {
      d: `M${x + pad} ${ly}h${len}`, stroke: "#fff", "stroke-opacity": 0.6, "stroke-width": 1.8,
      "stroke-dasharray": `${a} 1 2 .8 ${b} 1.8 1.5 .8`
    });
  }
}

left.forEach(t => branch(351, t[1]));
right.forEach(t => branch(449, t[1]));
left.forEach((t, i) => topic(350 - t[0], t[1], t[0], t[2], palette[i % 10], i + 1));
right.forEach((t, i) => topic(450, t[1], t[0], t[2], palette[i % 10], i + 5));

add("circle", { cx: 442, cy: 436, r: 1.5, fill: "#fff", stroke: "#549fd4", "stroke-width": 1 });
add("rect", { x: 359.5, y: 428.5, width: 81, height: 16, fill: "#fff", stroke: "#5b74f0", "stroke-width": 1 });
add("rect", { x: 361, y: 430, width: 78, height: 13, fill: "#df7b78", stroke: "none" });
add("text", { x: 400, y: 439 }).textContent = "初中文言文知识点汇总";

const fill = "b5121b d80f1e c34f73 e95464 ea6d72 e4629f df98bd f0908a f08d93 ffa17b efaa95 f5bfbf ead4e8 fdd5e3 ffdce3 122450 20386d 44307a 124a93 0069a8 4060ad 5a86c6 0080cc 0090d6 22a5e0 00b5ee 3cc4f2 8fc5ec a3dcf0 cdeaf5 064a3c 005c30 006a60 596e2f 007a43 219443 00ab9e 52bcc0 1fcab0 4bb97b 00ad50 80b812 a5cf63 c0d845 cce8c8 e3501f ec6c00 f18400 f29b54 f1a500 fdb000 fdb834 fbc936 ffd900 fff000 fdf287 fdd072 e9cb98 fddcab fbe6cf 7a3177 843f83 683b93 76549b 95659e 9e5a8a cf7cb0 a893cf c5a5c9 ebc0dc 5f2819 7a3d2c 96502f a9552a bc7640 b58872 dab885 d4cbc6 c8d3ce 000000 3e3a3b 595757 727171 898989 9fa0a0 b4b8b7 c8cbca dcdddd efefef";
const recent = "000000 ffffff 7078b8 1c1c1e 000000";

function swatches(id, list) {
  const host = document.getElementById(id);
  for (const c of list.split(" ")) {
    const i = document.createElement("i");
    i.style.background = "#" + c;
    host.appendChild(i);
  }
}
swatches("fill", fill);
swatches("recent", recent);
```
